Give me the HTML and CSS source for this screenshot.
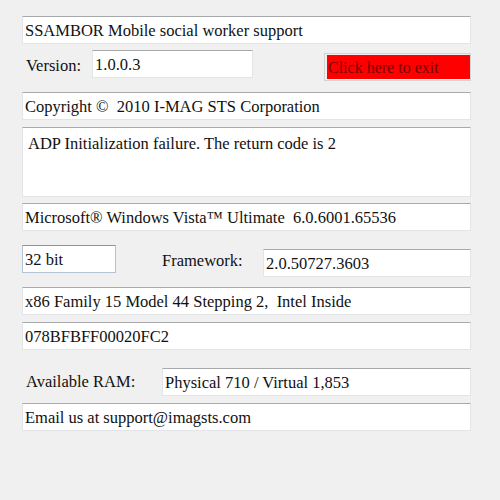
FILE: index.html
```html
<!DOCTYPE html>
<html>
<head>
<meta charset="utf-8">
<link rel="stylesheet" href="styles.css">
</head>
<body>
<div class="form">
  <div class="box r-title">SSAMBOR Mobile social worker support</div>
  <div class="row r-version">
    <span class="label lbl-version">Version:</span>
    <div class="box in-version">1.0.0.3</div>
    <div class="exit"><span>Click here to exit</span></div>
  </div>
  <div class="box r-copy">Copyright ©&nbsp; 2010 I-MAG STS Corporation</div>
  <div class="box area">ADP Initialization failure. The return code is 2</div>
  <div class="box r-os">Microsoft® Windows Vista™ Ultimate&nbsp; 6.0.6001.65536</div>
  <div class="row r-bits">
    <div class="box in-bits">32 bit</div>
    <span class="label lbl-fw">Framework:</span>
    <div class="box in-fw">2.0.50727.3603</div>
  </div>
  <div class="box r-cpu">x86 Family 15 Model 44 Stepping 2,&nbsp; Intel Inside</div>
  <div class="box r-id">078BFBFF00020FC2</div>
  <div class="row r-ram">
    <span class="label lbl-ram">Available RAM:</span>
    <div class="box in-ram">Physical 710 / Virtual 1,853</div>
  </div>
  <div class="box r-mail">Email us at support@imagsts.com</div>
</div>
</body>
</html>
```
FILE: styles.css
```css
html, body {
  margin: 0;
  padding: 0;
  background: #f0f0f0;
}
body {
  font-family: "Liberation Serif", "Times New Roman", serif;
  font-size: 16.5px;
  color: #111;
}
.form {
  display: flex;
  flex-direction: column;
  width: 449px;
  margin-left: 22px;
  padding-top: 16px;
}
.box {
  box-sizing: border-box;
  height: 28px;
  background: #fff;
  border: 1px solid #e3e4e8;
  border-top-color: #a9aaae;
  padding: 1px 2px 0;
  display: flex;
  align-items: center;
  white-space: nowrap;
}
.row {
  display: flex;
  align-items: flex-start;
}
.label {
  display: block;
}
.r-version { margin-top: 6px; height: 31px; }
.lbl-version { margin-left: 4px; margin-top: 6px; width: 66px; }
.in-version { width: 161px; padding-left: 2px; }
.exit {
  box-sizing: border-box;
  margin-left: auto;
  margin-top: 3px;
  width: 147px;
  height: 28px;
  border: 1px solid #d4d4d4;
  padding: 1px 0 1px 2px;
  display: flex;
}
.exit span {
  flex: 1;
  background: #ff0000;
  color: #7a0000;
  padding: 1px 0 0 1px;
  display: flex;
  align-items: center;
  font-size: 16px;
}
.r-copy { margin-top: 11px; }
.area {
  margin-top: 7px;
  height: 70px;
  align-items: flex-start;
  padding: 6px 5px;
}
.r-os { margin-top: 6px; }
.r-bits { margin-top: 14px; height: 32px; }
.in-bits {
  width: 94px;
  border-color: #b5c3d6;
  border-top-color: #7f96b8;
}
.lbl-fw { margin-left: 46px; margin-top: 6px; width: 101px; }
.in-fw { flex: 1; margin-top: 4px; }
.r-cpu { margin-top: 10px; }
.r-id { margin-top: 7px; }
.r-ram { margin-top: 18px; }
.lbl-ram { margin-left: 4px; margin-top: 4px; width: 136px; }
.in-ram { flex: 1; }
.r-mail { margin-top: 7px; }
```
